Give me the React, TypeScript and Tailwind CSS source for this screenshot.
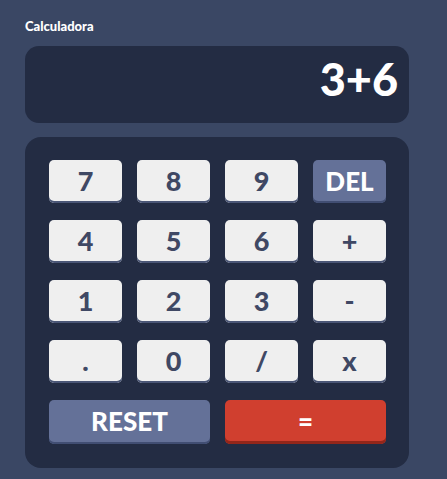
import React from 'react';

const keys: { label: string; kind: 'num' | 'del' }[] = [
  { label: '7', kind: 'num' },
  { label: '8', kind: 'num' },
  { label: '9', kind: 'num' },
  { label: 'DEL', kind: 'del' },
  { label: '4', kind: 'num' },
  { label: '5', kind: 'num' },
  { label: '6', kind: 'num' },
  { label: '+', kind: 'num' },
  { label: '1', kind: 'num' },
  { label: '2', kind: 'num' },
  { label: '3', kind: 'num' },
  { label: '-', kind: 'num' },
  { label: '.', kind: 'num' },
  { label: '0', kind: 'num' },
  { label: '/', kind: 'num' },
  { label: 'x', kind: 'num' },
];

export default function App() {
  return (
    <div className="w-[447px] h-[479px] bg-[#3a4764] pt-[19px] pl-[25px] font-['Lato',sans-serif] overflow-hidden">
      <div className="w-[384px]">
        {/* Header */}
        <h1 className="text-[13px] font-black text-white leading-[14px] mb-[13px]">Calculadora</h1>

        {/* Display */}
        <div className="h-[77px] rounded-[14px] bg-[#232c43] flex justify-end items-start pt-[4px] pr-[11px]">
          <span className="text-[45px] font-black text-white leading-[58px]">3+6</span>
        </div>

        {/* Keypad */}
        <div className="mt-[14px] h-[331px] rounded-[16px] bg-[#232c43] pt-[23px] pl-[24px] pr-[23px] pb-[24px]">
          <div className="grid grid-cols-4 gap-x-[15px] gap-y-[17px]">
            {keys.map((k) => (
              <button
                key={k.label}
                className={
                  k.kind === 'del'
                    ? 'h-[43px] rounded-[5px] bg-[#647198] shadow-[inset_0_-2px_0_#414e73] text-white text-[26px] font-black leading-none pb-[2px]'
                    : 'h-[43px] rounded-[5px] bg-[#efefef] shadow-[inset_0_-2px_0_#4a5676] text-[#3f4864] text-[27px] font-black leading-none pb-[2px]'
                }
              >
                {k.label}
              </button>
            ))}
            <button className="col-span-2 h-[44px] rounded-[5px] bg-[#647198] shadow-[inset_0_-2px_0_#414e73] text-white text-[26px] font-black leading-none pb-[2px]">
              RESET
            </button>
            <button className="col-span-2 h-[44px] rounded-[5px] bg-[#d03f2f] shadow-[inset_0_-3px_0_#93261a] text-white text-[26px] font-black leading-none pb-[2px]">
              =
            </button>
          </div>
        </div>
      </div>
    </div>
  );
}
